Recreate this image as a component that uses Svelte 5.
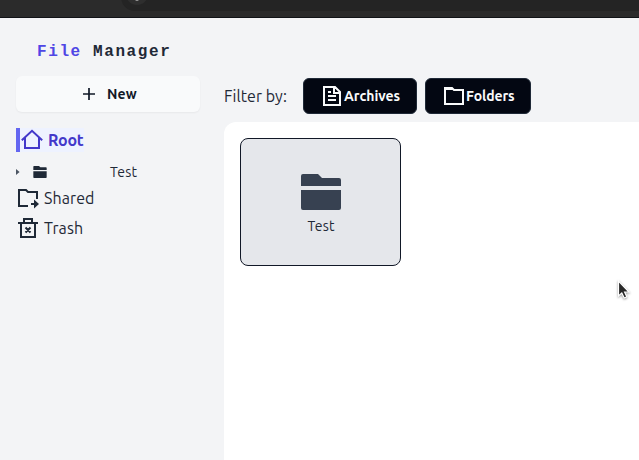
<script>
  const places = [
    { name: 'Shared', kind: 'shared' },
    { name: 'Trash', kind: 'trash' }
  ];
</script>

<div class="screen">
  <div class="chrome"><div class="address"><div class="knob"><i></i></div></div></div>
  <div class="body">
    <aside>
      <h1><span>File</span> Manager</h1>
      <button class="new">
        <svg width="20" height="20" viewBox="0 0 20 20"><path d="M10 4v12M4 10h12" stroke="currentColor" stroke-width="1.7" /></svg>
        <span class="new-label">New</span>
      </button>
      <div class="root">
        <svg width="24" height="24" viewBox="0 0 24 24" fill="none" stroke="currentColor" stroke-width="2"><path d="M1.8 12.2 12 2.8l10.2 9.4M5 9.8V20h14V9.8" /></svg>
        <span>Root</span>
      </div>
      <div class="tree">
        <svg class="caret" width="4" height="6" viewBox="0 0 4 6"><path d="M0 0l3.6 3L0 6z" fill="#4b5563" /></svg>
        <svg class="mini" width="14" height="12" viewBox="0 0 40 36"><path d="M2 0h15l4 4h17q2 0 2 2v6H0V2Q0 0 2 0zM0 16h40v18q0 2-2 2H2q-2 0-2-2z" fill="#1f2937" /></svg>
        <span>Test</span>
      </div>
      {#each places as place}
        <div class="place">
          {#if place.kind === 'shared'}
            <svg width="24" height="24" viewBox="0 0 24 24" fill="none" stroke="currentColor" stroke-width="2"><path d="M12 20H3V4h7l2 2h9v7" /><path d="M15 18h5" /><path d="M18 13.5l5 4.5-5 4.5z" fill="currentColor" stroke="none" /></svg>
          {:else}
            <svg width="24" height="24" viewBox="0 0 24 24" fill="none" stroke="currentColor" stroke-width="2"><path d="M2 7h20M5 7v14h14V7M8 6V3h8v3M9.5 11.5l5 5M14.5 11.5l-5 5" /></svg>
          {/if}
          <span class={place.kind}>{place.name}</span>
        </div>
      {/each}
    </aside>
    <main>
      <div class="filters">
        <span class="by">Filter by:</span>
        <button class="archives">
          <svg width="24" height="24" viewBox="0 0 24 24" fill="none" stroke="currentColor" stroke-width="2"><path d="M4 3h11l5 5v13H4zM14 3v6h6M8 8h3M8 12h8M8 16h8" /></svg>
          <span>Archives</span>
        </button>
        <button class="folders">
          <svg width="24" height="24" viewBox="0 0 24 24" fill="none" stroke="currentColor" stroke-width="2"><path d="M3 20V4h7l2 2h9v14z" /><path d="M3 5h8" /></svg>
          <span>Folders</span>
        </button>
      </div>
      <section>
        <div class="card">
          <svg width="40" height="36" viewBox="0 0 40 36"><path d="M2 0h15l4 4h17q2 0 2 2v6H0V2Q0 0 2 0zM0 16h40v18q0 2-2 2H2q-2 0-2-2z" fill="#374151" /></svg>
          <span>Test</span>
        </div>
      </section>
    </main>
  </div>
  <svg class="cursor" width="14" height="22" viewBox="0 0 14 22"><path d="M1.5 1v15l3.3-3 2.4 5 2.6-1.2-2.2-4.8H12z" fill="#282828" stroke="#fff" stroke-width="1.2" /></svg>
</div>

<style>
  :global(body) { margin: 0; }
  * { box-sizing: border-box; }
  svg { display: block; flex: none; }
  button { border: 0; margin: 0; padding: 0; font: inherit; color: inherit; }
  .screen { position: relative; width: 639px; height: 460px; overflow: hidden; background: #f3f4f6; color: #1f2937; font-family: Ubuntu, "Noto Sans", sans-serif; font-size: 16px; line-height: 24px; white-space: nowrap; }
  .chrome { height: 18px; background: #2b2b2b; border-bottom: 1px solid #111317; padding-left: 121px; overflow: hidden; }
  .address { height: 28px; margin-top: -17px; background: #242424; border-radius: 14px 0 0 14px; padding: 0 0 0 5px; }
  .knob { width: 22px; height: 22px; border-radius: 50%; background: #2e2e2e; display: flex; align-items: flex-end; justify-content: center; padding-bottom: 4px; }
  .knob i { width: 4px; height: 4px; background: #999; border-radius: 2px; }
  .body { display: flex; height: 442px; }
  aside { width: 224px; padding: 22px 24px 0 16px; }
  h1 { margin: 0 0 12px; padding-left: 21px; font: bold 16px/24px "Liberation Mono", monospace; letter-spacing: 1.6px; }
  h1 span { color: #4f46e5; }
  .new { display: flex; width: 184px; height: 36px; align-items: center; padding-left: 63px; gap: 8px; border-radius: 6px; background: #f9fafb; box-shadow: 0 1px 2px #0000000d; font-size: 14px; font-weight: 600; color: #111827; }
  .new-label { letter-spacing: .15px; }
  .root { display: flex; width: 68px; height: 24px; margin-top: 16px; border-left: 4px solid #6366f1; background: #eef2ff; color: #4338ca; font-weight: 600; gap: 4px; letter-spacing: -.2px; }
  .tree { display: flex; align-items: center; height: 20px; margin: 10px 0 4px; font-size: 14px; letter-spacing: .2px; }
  .mini { margin-left: 13px; }
  .tree span { margin-left: 63px; }
  .place { display: flex; gap: 4px; height: 24px; margin-bottom: 6px; letter-spacing: .1px; }
  main { flex: 1; min-width: 0; padding-top: 60px; }
  .filters { display: flex; height: 36px; align-items: center; margin-bottom: 8px; }
  .by { width: 79px; letter-spacing: .06px; }
  .filters button { height: 36px; display: flex; align-items: center; background: #030712; color: #f9fafb; border: 1px solid #1f2937; border-radius: 6px; font-size: 14px; font-weight: 600; }
  .archives { width: 114px; padding-left: 16px; letter-spacing: -.02px; }
  .folders { width: 106px; margin-left: 8px; padding-left: 16px; letter-spacing: -.1px; }
  section { height: 338px; padding: 16px; background: #fff; border-radius: 12px 0 0; }
  .card { width: 161px; height: 128px; border: 1px solid #111827; border-radius: 8px; background: #e5e7eb; display: flex; flex-direction: column; align-items: center; padding-top: 35px; padding-left: 1px; font-size: 14px; line-height: 20px; letter-spacing: .2px; }
  .card span { margin-top: 6px; }
  .cursor { position: absolute; left: 617px; top: 280px; filter: drop-shadow(0 1px 1px #0006); }
</style>
